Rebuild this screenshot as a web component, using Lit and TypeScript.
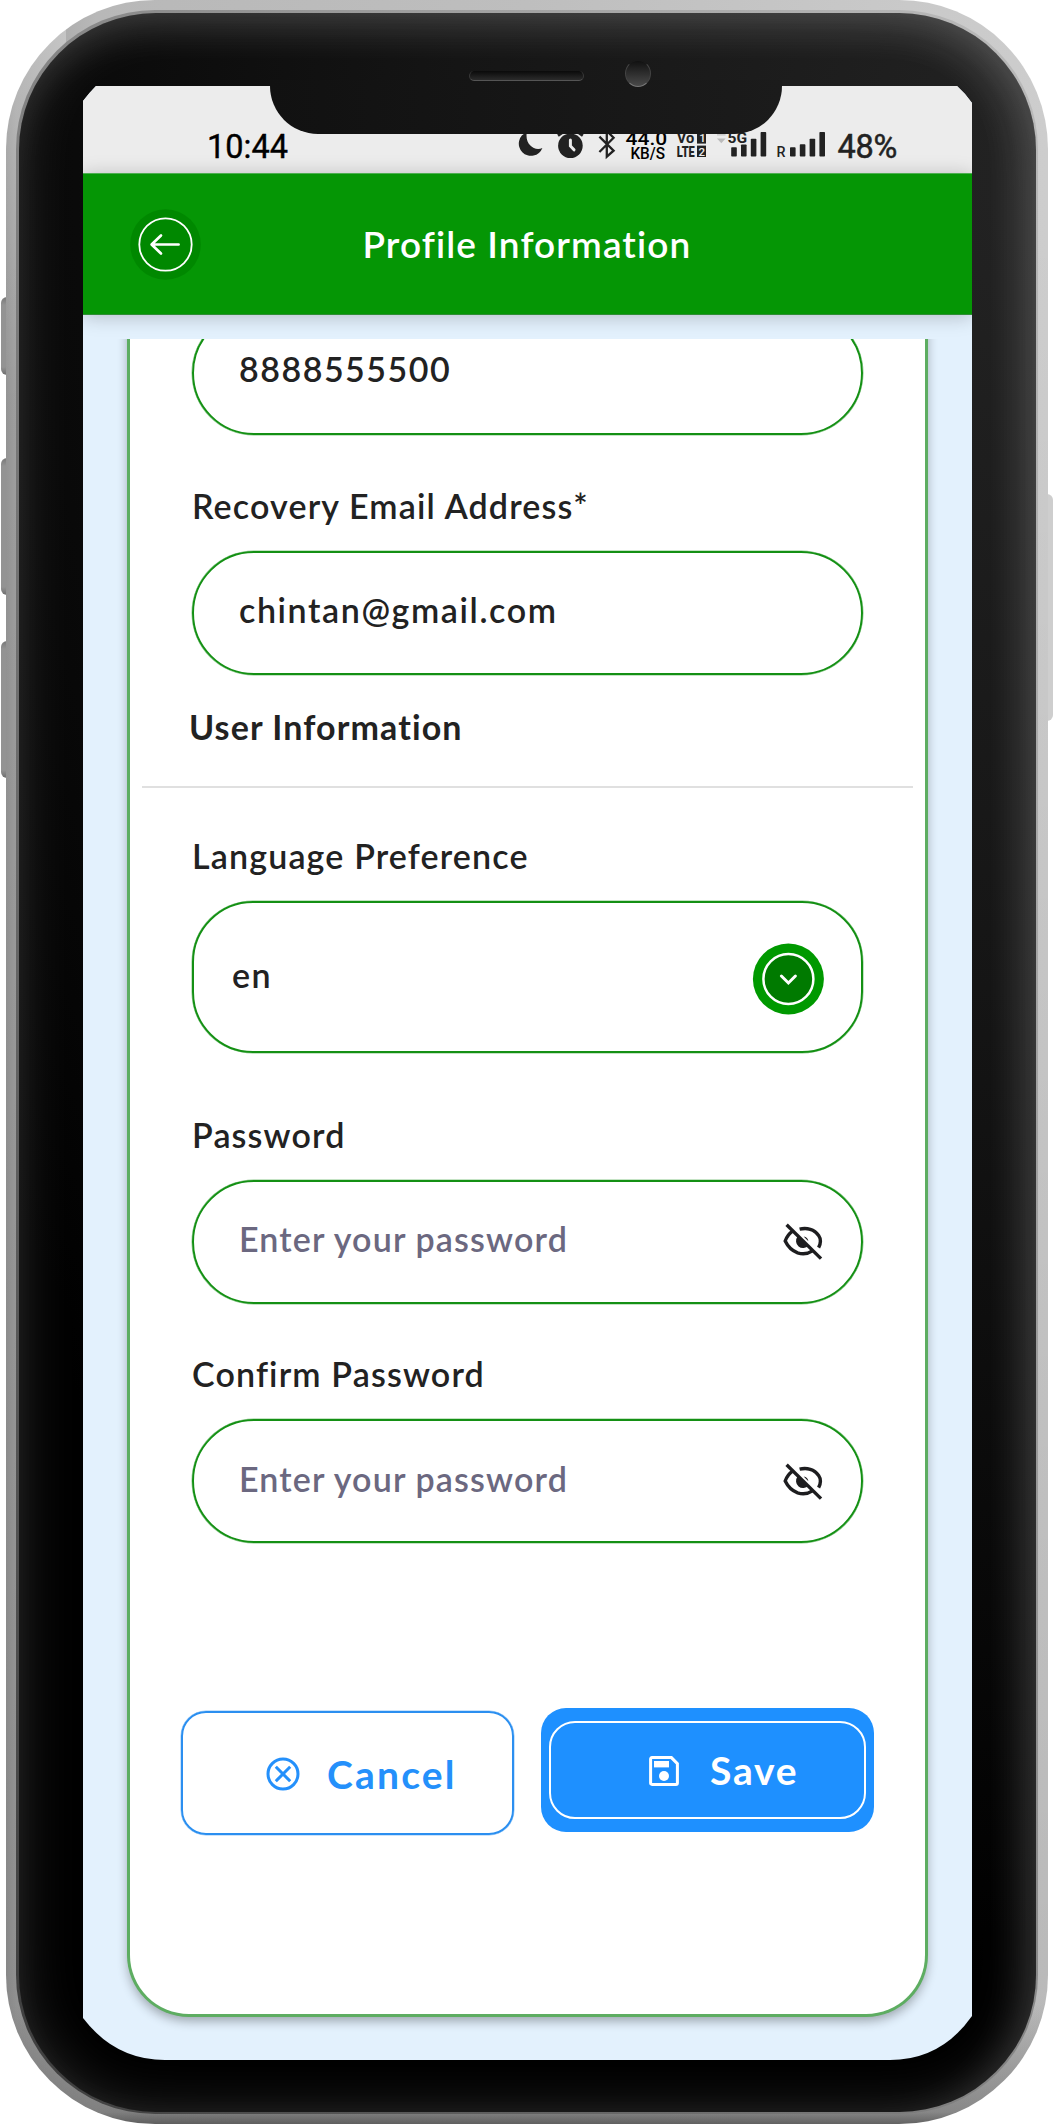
import { LitElement, html, svg, css, nothing } from "lit";
import { customElement, property } from "lit/decorators.js";

const eyeOff = html`<svg class="eye" viewBox="0 0 40 37" fill="none" stroke="#1d1d1f" stroke-width="3.4">
  <path d="M16.6 6.2C24 4.4 31.4 6.6 35.6 12.4Q39.2 17.8 35.6 24.6" />
  <path d="M9.6 8.2Q4.6 11.6 2.2 18Q6.4 26.8 14.6 29.8Q22.6 32.4 29.4 27.8" />
  <path d="M14.6 13.6A6.4 6.4 0 1 0 25.4 22.4Z" fill="#1d1d1f" stroke="none" />
  <path d="M20.6 13.4Q24.8 14 25.4 18.2Z" fill="#1d1d1f" stroke="none" />
  <path d="M3.6 1.8L38 35.6" />
</svg>`;

@customElement("form-field")
class FormField extends LitElement {
  @property() label = "";
  @property() value = "";
  @property() placeholder = "";
  @property() kind: "text" | "digits" | "email" | "password" | "select" = "text";

  static styles = css`
    :host { display: block; color: #222; font: 600 34px/48px Lato, "Liberation Sans", sans-serif; }
    .label { letter-spacing: 1.15px; margin: 0 0 21px; white-space: nowrap; }
    .box {
      box-sizing: border-box; height: 124px; border: 2px solid #149014; border-radius: 62px;
      box-shadow: 0 0 0 0.5px rgba(20, 144, 20, 0.5);
      padding: 0 38px 5px 45px; display: flex; align-items: center; justify-content: space-between;
    }
    .text { letter-spacing: 1.15px; white-space: nowrap; }
    .digits .text { letter-spacing: 1.5px; margin-top: -3px; }
    .email .text { letter-spacing: 1.6px; margin-top: -1px; }
    .password .text { color: #6b6880; }
    .select { height: 152px; border-radius: 61px; padding: 0 37px 0 38px; }
    .select .text { letter-spacing: 1.5px; margin-top: -3px; }
    .eye { width: 40px; height: 37px; margin-top: 5px; }
    .drop { width: 72px; height: 72px; margin-top: 5px; }
  `;

  render() {
    return html`
      ${this.label ? html`<div class="label">${this.label}</div>` : nothing}
      <div class="box ${this.kind}">
        <span class="text">${this.value || this.placeholder}</span>
        ${this.kind === "password" ? eyeOff : nothing}
        ${this.kind === "select"
          ? html`<svg class="drop" viewBox="0 0 72 72">
              <circle cx="36.4" cy="36" r="35.5" fill="#090" />
              <circle cx="36.4" cy="36" r="25" fill="#007a00" stroke="#fff" stroke-width="2.5" />
              <path d="M29.4 33l7 7 7-7" fill="none" stroke="#fff" stroke-width="3" stroke-linecap="round" />
            </svg>`
          : nothing}
      </div>
    `;
  }
}

const bars = (x: number, heights: number[]) =>
  heights.map((h, i) => svg`<rect x=${x + i * 9.8} y=${156.6 - h} width="5.6" height=${h} rx="0.8" />`);

@customElement("app-root")
class AppRoot extends LitElement {
  static styles = css`
    :host { display: block; font-family: Lato, "Liberation Sans", sans-serif; color: #222; }
    * { box-sizing: border-box; }
    .stage { position: relative; width: 1054px; height: 2124px; padding: 0 6px; background: #fff; overflow: hidden; }
    .key { position: absolute; width: 10px; left: 1px; border-radius: 6px 0 0 6px; background: linear-gradient(#777, #939393 8px, #939393 calc(100% - 8px), #6c6c6c); }
    .k1 { top: 297px; height: 78px; }
    .k2 { top: 458px; height: 137px; }
    .k3 { top: 641px; height: 137px; }
    .k4 { left: 1043px; top: 494px; height: 227px; border-radius: 0 6px 6px 0; background: #cecece; }
    .frame {
      position: relative; width: 1042px; height: 2124px; padding: 10px; border-radius: 149px;
      background:
        linear-gradient(to top, rgba(70, 70, 70, 0.75), rgba(90, 90, 90, 0.5) 12px, rgba(110, 110, 110, 0) 120px),
        linear-gradient(rgba(0, 0, 0, 0) 10%, rgba(0, 0, 0, 0.1)),
        linear-gradient(rgba(255, 255, 255, 0.3), rgba(255, 255, 255, 0) 400px) left top / 60px 400px no-repeat,
        linear-gradient(to right, #959595, #a0a0a0 10px, #b8b8b8 90px, #bebebe 50%, #cdcdcd);
    }
    .rim { height: 2104px; padding: 2.5px; border-radius: 139px; background: linear-gradient(to bottom left, #bbb, #999 35%, #777 60%, #3c3c3c); }
    .bezel {
      height: 2099px; padding: 73.5px 63px 0 64.5px; border-radius: 137px;
      background: radial-gradient(ellipse 1300px 1800px at 100% 8%, #232323, #151515 45%, #000);
      box-shadow:
        inset 0 0 56px rgba(255, 255, 255, 0.16),
        inset -14px 14px 48px -8px rgba(255, 255, 255, 0.14);
    }
    .screen {
      height: 1974px; width: 889px; background: #e3f1fd; display: flex; flex-direction: column;
      clip-path: path("M0 15Q6 7 13 0H874Q882 7 889 17V1930Q858 1974 807 1974H82Q32 1974 0 1932Z");
    }
    .notch {
      position: absolute; left: 264px; top: 80px; width: 512px; height: 54px;
      border-radius: 0 0 48px 48px; background: linear-gradient(to right, #111, #1b1b1b);
    }
    .speaker {
      position: absolute; left: 463px; top: 71px; width: 115px; height: 10px; border-radius: 5px;
      background: linear-gradient(#0a0a0a, #2b2b2b); border-bottom: 1.5px solid #555; border-left: 1px solid #3a3a3a; border-right: 1px solid #3a3a3a;
    }
    .lens {
      position: absolute; left: 619px; top: 60px; width: 26px; height: 27px; border-radius: 50%;
      background: linear-gradient(#111, #4a4a4a); border: 1px solid #444; border-top-color: #1a1a1a; border-bottom-color: #777;
    }
    .status {
      height: 87px; flex: none; background: #ececec; display: flex; align-items: flex-end; padding: 0 75px 4px 124px;
      font: 400 32.5px/43px Roboto, sans-serif; color: #000;
    }
    .status b { font-weight: 400; color: #222; -webkit-text-stroke: 0.5px #222; letter-spacing: -0.3px; }
    .time { width: 80px; -webkit-text-stroke: 0.4px #000; }
    .glyphs { width: 320px; height: 87px; margin: 0 3px -4px auto; fill: #222; }
    .header {
      position: relative; height: 142px; flex: none; background: #059605; color: #fff; display: flex; align-items: center; padding: 0 46px;
      border-top: 1px solid #4caf50; border-bottom: 1px solid #2f8d35; box-shadow: 0 2px 18px rgba(0, 0, 0, 0.22);
    }
    .back { width: 71px; height: 71px; margin-left: 0.5px; }
    .title { margin: 0 0 0 162px; font-size: 37px; font-weight: 600; letter-spacing: 1.1px; line-height: 48px; white-space: nowrap; }
    .scroll { margin-top: 24px; height: 1721px; overflow: hidden; position: relative; }
    .card {
      margin: -28px 44px 0; height: 1705.5px; background: #fff; border: 3px solid #5dad61; border-top: 0;
      border-radius: 0 0 62px 62px; box-shadow: 0 5px 11px -1px rgba(0, 0, 0, 0.32); display: flex; flex-direction: column;
    }
    form-field { margin: 0 62px; }
    .gap { margin-top: 46.5px; }
    .lang { margin-top: 44px; }
    .pass { margin-top: 58px; }
    .section { margin: 28px 0 0 59px; font-size: 34px; line-height: 48px; font-weight: 700; letter-spacing: 1.1px; white-space: nowrap; }
    .rule { height: 2px; margin: 35px 12px 0; background: #e0e0e0; }
    .actions { display: flex; align-items: flex-start; gap: 27px; margin: 165px 0 0 51px; }
    .btn {
      width: 333px; height: 124px; border-radius: 25px; display: flex; align-items: center; font-size: 39px; font-weight: 700;
      letter-spacing: 2.2px; line-height: 48px;
    }
    .btn svg { flex: none; }
    .cancel { margin-top: 3px; color: #2490fb; border: 2px solid #2b8ff0; box-shadow: 0 0 0 0.5px rgba(43, 143, 240, 0.5); padding: 2px 0 0 83px; }
    .cancel svg { width: 34px; height: 34px; }
    .cancel span { margin-left: 27px; }
    .save { background: #1e90ff; color: #fff; padding: 13px 8px; }
    .inner { width: 317px; height: 98px; border: 2.5px solid #fff; border-radius: 26px; display: flex; align-items: center; padding: 1px 0 0 98px; }
    .inner svg { width: 30px; height: 30px; }
    .inner span { margin-left: 31px; letter-spacing: 1.8px; margin-top: -1px; }
  `;

  private glyphs() {
    return html`<svg class="glyphs" viewBox="515 86 320 87">
      <path d="M526.8 132.2A12.2 12.2 0 1 0 542.4 148C535 151.6 524.6 145 526.8 132.2Z" />
      <circle cx="570.4" cy="145.7" r="12.3" />
      <path d="M558 135.6l6.5-4.6M582.8 135.6l-6.5-4.6" stroke="#222" stroke-width="2.8" />
      <path d="M570.4 140v6l3.6 3.8" fill="none" stroke="#ececec" stroke-width="3" stroke-linecap="round" />
      <path d="M599.4 136.6L613.6 150.6L606.8 156.6V131L613.6 137.8L599.4 152" fill="none" stroke="#222" stroke-width="2.3" />
      <g font-family="Roboto, sans-serif" font-weight="500">
        <text x="625.6" y="144.8" font-size="18.5" textLength="41.6" lengthAdjust="spacingAndGlyphs" fill="#000">44.0</text>
        <text x="630.4" y="159.4" font-size="16.5" textLength="34.6" lengthAdjust="spacingAndGlyphs" fill="#000">KB/S</text>
        <text x="676.8" y="143" font-size="14.5" font-weight="700" textLength="17.5" lengthAdjust="spacingAndGlyphs">Vo</text>
        <text x="676.8" y="156.6" font-size="15.5" font-weight="900" textLength="18" lengthAdjust="spacingAndGlyphs">LTE</text>
        <rect x="697" y="128" width="9" height="15.6" />
        <rect x="697" y="145.6" width="9" height="11.4" />
        <text x="699.3" y="142.4" font-size="11.5" fill="#ececec">1</text>
        <text x="698.4" y="155.6" font-size="11.5" fill="#ececec">2</text>
        <path d="M717 138.4h8.6l-4.3 4.8z" fill="#bbb" />
        <rect x="717" y="134" width="8.6" height="1.6" fill="#ccc" />
        <text x="727.6" y="143" font-size="15" font-weight="700" textLength="19.6" lengthAdjust="spacingAndGlyphs">5G</text>
        <text x="776.6" y="157.4" font-size="15.5" textLength="9" lengthAdjust="spacingAndGlyphs">R</text>
      </g>
      ${bars(731.2, [9.4, 12.2, 17.8, 24.6])} ${bars(790, [9.4, 12.4, 17.8, 24.6])}
    </svg>`;
  }

  render() {
    return html`<div class="stage">
      <i class="key k1"></i><i class="key k2"></i><i class="key k3"></i><i class="key k4"></i>
      <div class="frame">
        <div class="rim"><div class="bezel">
          <div class="screen">
            <div class="status"><span class="time">10:44</span>${this.glyphs()}<b>48%</b></div>
            <div class="header">
              <svg class="back" viewBox="0 0 71 71" fill="none" stroke="#fff">
                <circle cx="35.5" cy="35.5" r="35.3" fill="#008800" stroke="none" />
                <circle cx="35.5" cy="35.5" r="26.2" stroke-width="1.8" />
                <path d="M48.6 35.5H22M31 26.5L21.6 35.5L31 44.5" stroke-width="2.7" stroke-linecap="round" stroke-linejoin="round" />
              </svg>
              <span class="title">Profile Information</span>
            </div>
            <div class="scroll">
              <div class="card">
                <form-field kind="digits" value="8888555500"></form-field>
                <form-field class="gap" kind="email" label="Recovery Email Address*" value="chintan@gmail.com"></form-field>
                <div class="section">User Information</div>
                <div class="rule"></div>
                <form-field class="lang" kind="select" label="Language Preference" value="en"></form-field>
                <form-field class="pass" kind="password" label="Password" placeholder="Enter your password"></form-field>
                <form-field class="gap" kind="password" label="Confirm Password" placeholder="Enter your password"></form-field>
                <div class="actions">
                  <div class="btn cancel">
                    <svg viewBox="0 0 34 34" fill="none" stroke="#2490fb" stroke-width="3">
                      <circle cx="17" cy="17" r="15" />
                      <path d="M9.8 9.8L24.2 24.2M24.2 9.8L9.8 24.2" />
                    </svg>
                    <span>Cancel</span>
                  </div>
                  <div class="btn save">
                    <div class="inner">
                      <svg viewBox="0 0 30 30">
                        <path d="M3 1.6H22.4L28.4 7.6V27Q28.4 28.4 27 28.4H3Q1.6 28.4 1.6 27V3Q1.6 1.6 3 1.6Z" fill="none" stroke="#fff" stroke-width="3" />
                        <path d="M5 5h15v6.4H5z" fill="#fff" />
                        <circle cx="15" cy="20" r="5" fill="#fff" />
                      </svg>
                      <span>Save</span>
                    </div>
                  </div>
                </div>
              </div>
            </div>
          </div>
        </div></div>
        <div class="notch"></div>
        <div class="speaker"></div>
        <div class="lens"></div>
      </div>
    </div>`;
  }
}
